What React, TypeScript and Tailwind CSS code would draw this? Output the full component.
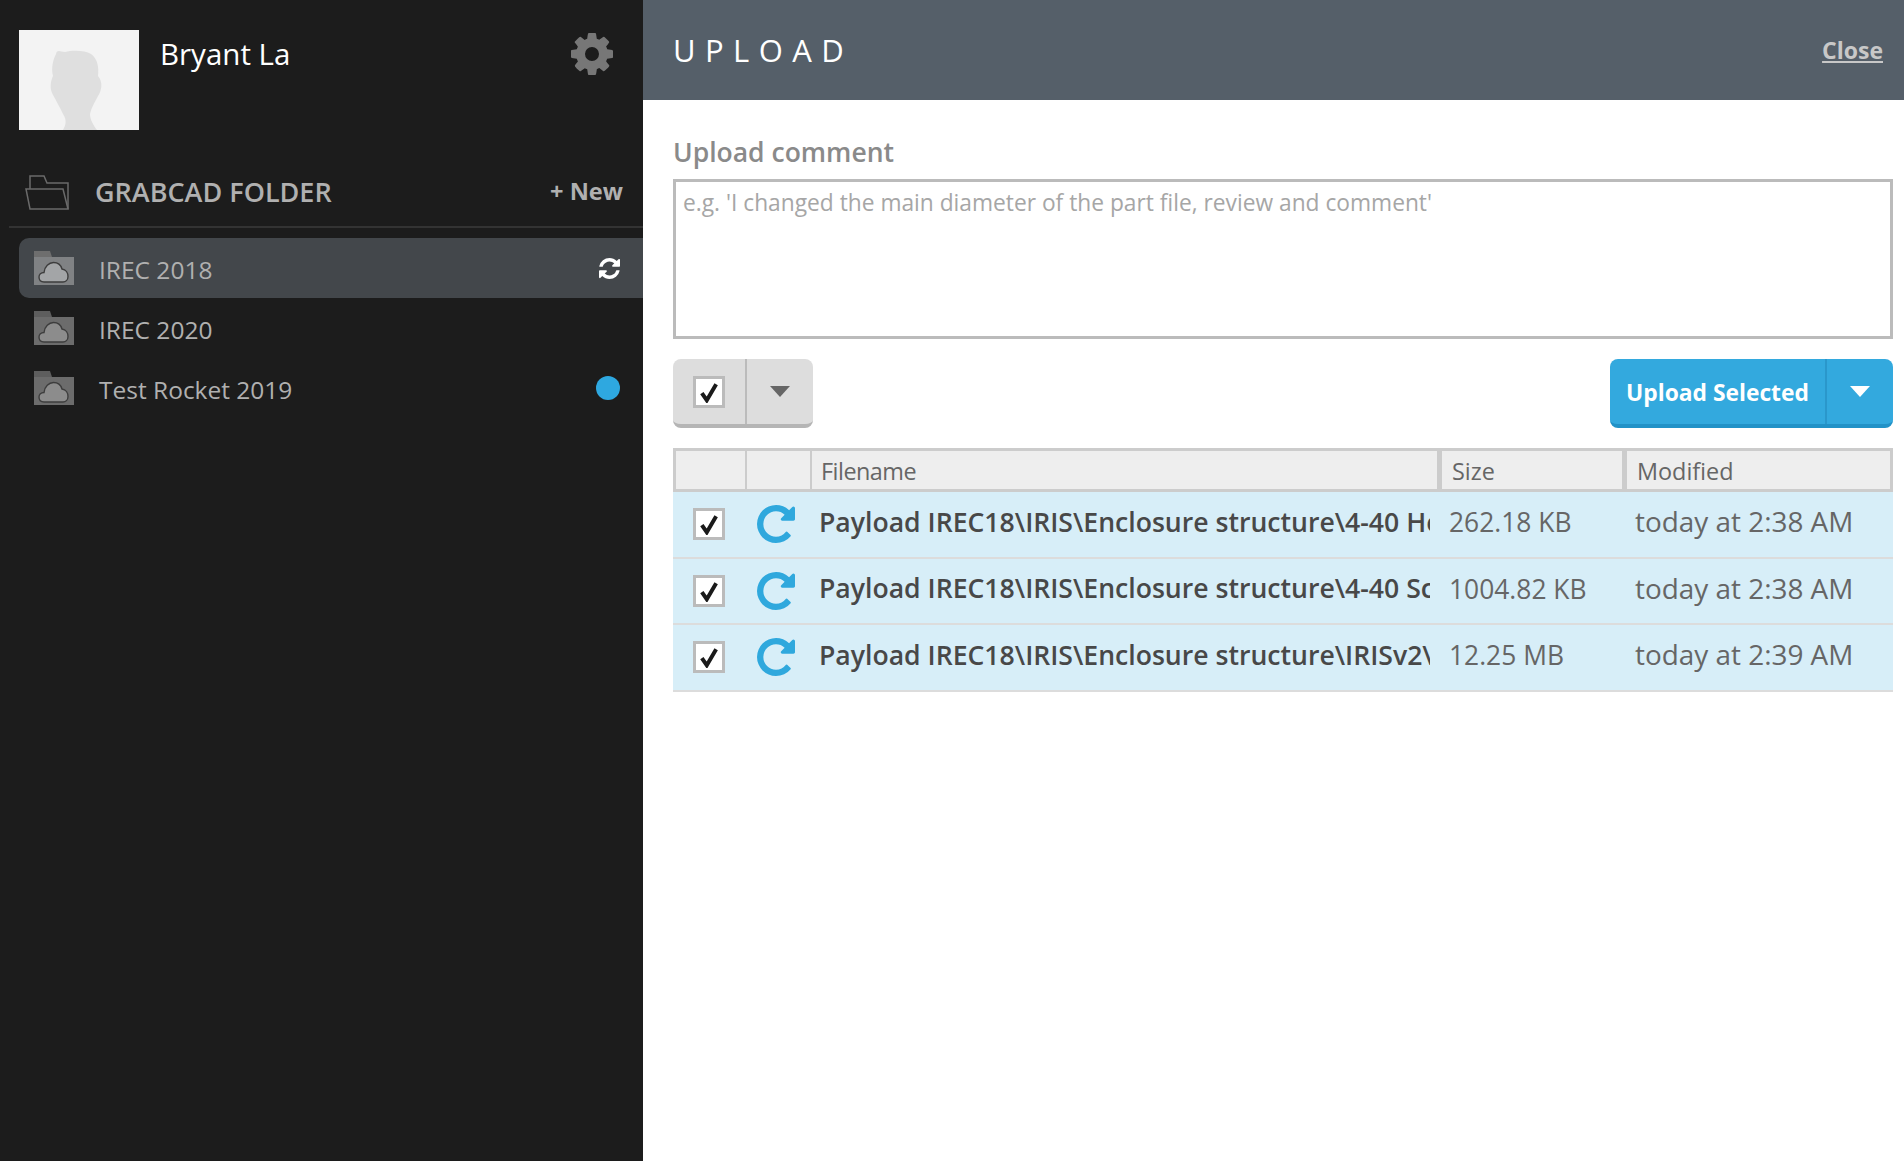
import React from 'react';

const FOLDERS = [
  { name: 'IREC 2018', active: true, status: 'sync' },
  { name: 'IREC 2020', active: false, status: '' },
  { name: 'Test Rocket 2019', active: false, status: 'dot' },
];

const FILES = [
  { name: 'Payload IREC18\\IRIS\\Enclosure structure\\4-40 Hex Nut.SLDPRT', size: '262.18 KB', modified: 'today at 2:38 AM' },
  { name: 'Payload IREC18\\IRIS\\Enclosure structure\\4-40 Screw.SLDPRT', size: '1004.82 KB', modified: 'today at 2:38 AM' },
  { name: 'Payload IREC18\\IRIS\\Enclosure structure\\IRISv2\\IRIS Body.SLDPRT', size: '12.25 MB', modified: 'today at 2:39 AM' },
];

const Checkbox = () => (
  <div className="w-8 h-8 border-[3px] border-[#bbbbbb] bg-white flex items-center justify-center">
    <svg viewBox="0 0 20 20" className="w-[22px] h-[22px]">
      <path d="M3.5 11 L8 17.5 L16.5 3" fill="none" stroke="#1a1a1a" strokeWidth="3.6" />
    </svg>
  </div>
);

const Caret = ({ color }: { color: string }) => (
  <svg viewBox="0 0 20 11" className="w-5 h-[11px]">
    <path d="M0 0 H20 L10 11 Z" fill={color} />
  </svg>
);

const RepeatIcon = () => (
  <svg viewBox="128 128 1536 1536" className="w-[38px] h-[38px]" fill="#2fa8dd">
    <path d="M1664 256v448q0 26-19 45t-45 19h-448q-42 0-59-40-17-39 14-69l138-138q-148-137-349-137-104 0-198.5 40.5t-163.5 109.5-109.5 163.5-40.5 198.5 40.5 198.5 109.5 163.5 163.5 109.5 198.5 40.5q119 0 225-52t179-147q7-10 23-12 14 0 25 9l137 138q9 8 9.5 20.5t-7.5 22.5q-109 132-264 204.5t-327 72.5q-156 0-298-61t-245-164-164-245-61-298 61-298 164-245 245-164 298-61q147 0 284.5 55.5t244.5 156.5l130-129q29-31 70-14 39 17 39 59z" />
  </svg>
);

const RefreshIcon = () => (
  <svg viewBox="128 128 1536 1536" className="w-[21px] h-[21px]" fill="#ffffff">
    <path d="M1639 1056q0 5-1 7-64 268-268 434.5t-478 166.5q-146 0-282.5-55t-243.5-157l-129 129q-19 19-45 19t-45-19-19-45v-448q0-26 19-45t45-19h448q26 0 45 19t19 45-19 45l-137 137q71 66 161 102t187 36q134 0 250-65t186-179q11-17 53-117 8-23 30-23h192q13 0 22.5 9.5t9.5 22.5zm25-800v448q0 26-19 45t-45 19h-448q-26 0-45-19t-19-45 19-45l138-138q-148-137-349-137-134 0-250 65t-186 179q-11 17-53 117-8 23-30 23h-199q-13 0-22.5-9.5t-9.5-22.5v-7q65-268 270-434.5t480-166.5q146 0 284 55.5t245 156.5l130-129q19-19 45-19t45 19 19 45z" />
  </svg>
);

const CogIcon = () => (
  <svg viewBox="128 128 1536 1536" className="w-[42px] h-[42px] mt-[3px] mr-[1px]" fill="#777777">
    <path d="M1152 896q0-106-75-181t-181-75-181 75-75 181 75 181 181 75 181-75 75-181zm512-109v222q0 12-8 23t-20 13l-185 28q-19 54-39 91 35 50 107 138 10 12 10 25t-9 23q-27 37-99 108t-94 71q-12 0-26-9l-138-108q-44 23-91 38-16 136-29 186-7 28-36 28h-222q-14 0-24.5-8.5t-11.5-21.5l-28-184q-49-16-90-37l-141 107q-10 9-25 9-14 0-25-11-126-114-165-168-7-10-7-23 0-12 8-23 15-21 51-66.5t54-70.5q-27-50-41-99l-183-27q-13-2-21-12.5t-8-23.5v-222q0-12 8-23t19-13l186-28q14-46 39-92-40-57-107-138-10-12-10-24 0-10 9-23 26-36 98.5-107.5t94.5-71.5q13 0 26 10l138 107q44-23 91-38 16-136 29-186 7-28 36-28h222q14 0 24.5 8.5t11.5 21.5l28 184q49 16 90 37l142-107q9-9 24-9 13 0 25 10 129 119 165 170 7 8 7 22 0 12-8 23-15 21-51 66.5t-54 70.5q26 50 41 98l183 28q13 2 21 12.5t8 23.5z" />
  </svg>
);

const CloudFolder = ({ active }: { active: boolean }) => (
  <svg viewBox="0 0 40 34" className="w-10 h-[34px] shrink-0">
    <path d="M0 0 H16 L18 6 H40 V34 H0 Z" fill={active ? '#6e6e6e' : '#5e5e5e'} />
    <path d="M0 6 H40 V34 H0 Z" fill={active ? '#808284' : '#6c6c6c'} />
    <path
      d="M10 31 C6.5 31 5 28.5 5 26 C5 23.5 7 21.5 10 21.5 C10.5 15.5 15 11.5 19.5 11.5 C24 11.5 27 14.5 28 18 C32 18.5 34 22 34 25.5 C34 29 31.5 31 29 31 Z"
      fill={active ? '#a3a5a7' : '#8c8c8c'}
      stroke="#3d3d3d"
      strokeWidth="1.4"
    />
  </svg>
);

const OpenFolder = () => (
  <svg viewBox="0 0 44 35" className="w-11 h-[35px] shrink-0" fill="none" stroke="#6a6a6a" strokeWidth="1.5">
    <path d="M5 14 V1 H19 L22 8 H43 V34" />
    <path d="M1 14 H38 L43 34 H5 Z" />
  </svg>
);

const Avatar = () => (
  <div className="w-[120px] h-[100px] bg-[#f3f3f3] shrink-0">
    <svg viewBox="0 0 120 100" className="w-full h-full">
      <path
        d="M37 24 C38 19 42 22 46 22 C53 20 66 20 72 24 C79 29 80 38 79 46 C84 52 83 60 79 66 C76 72 72 78 71 84 C71 90 75 96 78 100 H44 C47 95 48 90 44 84 C40 76 37 70 34 65 C30 58 32 50 34 46 C32 38 34 30 37 24 Z"
        fill="#dfdfdf"
      />
    </svg>
  </div>
);

const App = () => {
  return (
    <div className="flex h-screen w-full overflow-hidden bg-white font-['Open_Sans',sans-serif]">
      <aside className="w-[643px] shrink-0 bg-[#1c1c1c] flex flex-col">
        <div className="flex items-start pl-[19px] pr-[29px] pt-[30px]">
          <Avatar />
          <div className="ml-[21px] text-[29.5px] leading-[48px] text-white flex-1">Bryant La</div>
          <CogIcon />
        </div>

        <div className="ml-[9px] mt-[28px] pl-[16px] pr-[20px] h-[70px] flex items-center border-b-2 border-[#333333]">
          <OpenFolder />
          <div className="ml-[26px] text-[27px] font-semibold text-[#b0b0b0] flex-1">GRABCAD FOLDER</div>
          <div className="text-[23.6px] font-bold text-[#b0b0b0]">+ New</div>
        </div>

        <div className="mt-[10px] ml-[19px] flex flex-col">
          {FOLDERS.map((folder) => (
            <div
              key={folder.name}
              className={`h-[60px] pl-[15px] pr-[23px] flex items-center rounded-l-[10px] ${folder.active ? 'bg-[#43474b]' : ''}`}
            >
              <CloudFolder active={folder.active} />
              <div className="ml-[25px] pt-[4px] text-[24.5px] text-[#b0b0b0] flex-1">{folder.name}</div>
              {folder.status === 'sync' && <RefreshIcon />}
              {folder.status === 'dot' && <div className="w-6 h-6 rounded-full bg-[#2ea8e0]" />}
            </div>
          ))}
        </div>
      </aside>

      <main className="flex-1 flex flex-col min-w-0">
        <div className="h-[100px] bg-[#555f69] flex items-center justify-between pl-[30px] pr-[21px]">
          <div className="text-[31px] font-medium tracking-[9.4px] text-white">UPLOAD</div>
          <a className="text-[23px] font-bold text-[#c8c8c8] underline">Close</a>
        </div>

        <div className="pl-[30px] pr-[11px] flex flex-col">
          <div className="mt-[32px] h-[47px] text-[26.5px] leading-[40px] font-semibold text-[#8a8a8a]">Upload comment</div>
          <div className="h-[160px] border-[3px] border-[#bbbbbb] px-[7px] pt-[4px] text-[22.75px] leading-[34px] text-[#a6a6a6]">
            e.g. 'I changed the main diameter of the part file, review and comment'
          </div>

          <div className="mt-[20px] flex justify-between">
            <div className="h-[69px] w-[140px] flex rounded-[8px] bg-[#dddddd] border-b-[4px] border-[#b5b5b5]">
              <div className="w-[74px] flex items-center justify-center border-r-2 border-[#bbbbbb]">
                <Checkbox />
              </div>
              <div className="flex-1 flex items-center justify-center">
                <Caret color="#666666" />
              </div>
            </div>
            <div className="h-[69px] w-[283px] flex rounded-[8px] bg-[#33a9de] border-b-[4px] border-[#2292c7] text-white">
              <div className="w-[217px] flex items-center justify-center pt-[3px] border-r-2 border-[#2a97cb] text-[22.8px] font-bold">
                Upload Selected
              </div>
              <div className="flex-1 flex items-center justify-center">
                <Caret color="#ffffff" />
              </div>
            </div>
          </div>

          <div className="mt-[20px]">
            <div className="h-[44px] grid grid-cols-[71px_65px_630px_185px_1fr] bg-[#eeeeee] border-[3px] border-[#cccccc] text-[23.4px] leading-[40px] text-[#666666]">
              <div className="border-r-2 border-[#cccccc]" />
              <div className="border-r-2 border-[#cccccc]" />
              <div className="pl-[9px] border-r-[5px] border-[#cccccc] tracking-[-0.5px]">Filename</div>
              <div className="pl-[10px] border-r-[5px] border-[#cccccc]">Size</div>
              <div className="pl-[10px]">Modified</div>
            </div>
            {FILES.map((file) => (
              <div
                key={file.name}
                className="h-[66.5px] grid grid-cols-[72px_62px_630px_185px_1fr] items-center bg-[#d7eef8] border-b-2 border-[#dcdcdc]"
              >
                <div className="flex justify-center">
                  <Checkbox />
                </div>
                <div className="flex justify-center">
                  <RepeatIcon />
                </div>
                <div className="pl-[12px] pr-[7px] pb-[3px]">
                  <div className="overflow-hidden whitespace-nowrap font-semibold text-[26.6px] text-[#484848]">{file.name}</div>
                </div>
                <div className="pl-[12px] pb-[2px] font-medium text-[26.4px] text-[#666666]">{file.size}</div>
                <div className="pl-[13px] pb-[4px] font-medium text-[27.9px] text-[#666666]">{file.modified}</div>
              </div>
            ))}
          </div>
        </div>
      </main>
    </div>
  );
};

export default App;
